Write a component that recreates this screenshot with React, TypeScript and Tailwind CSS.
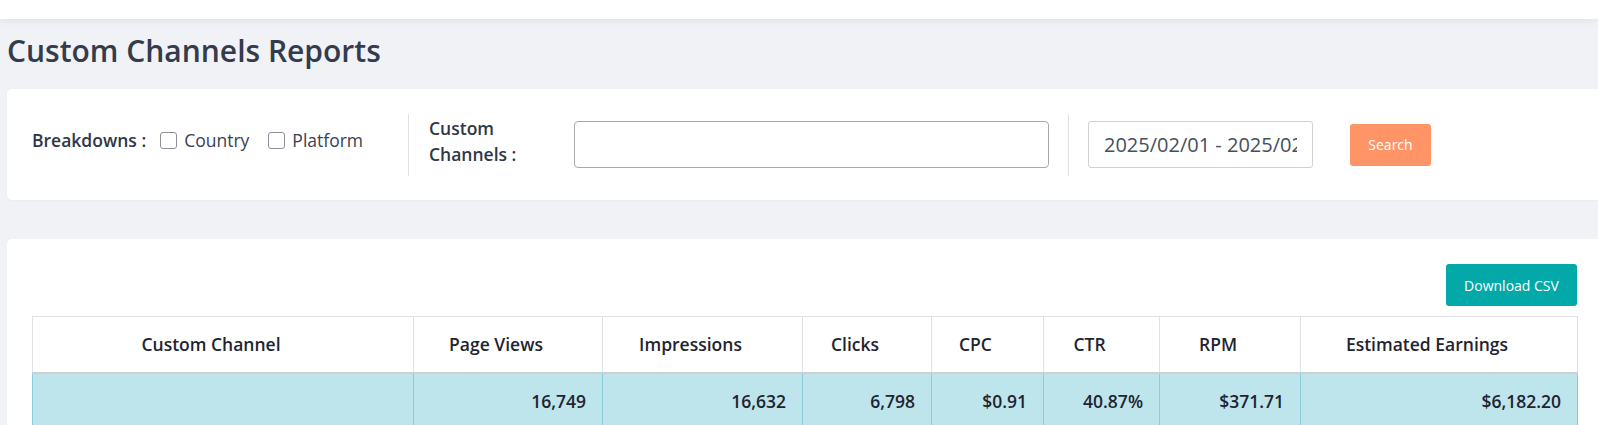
import React from 'react'

const columns = [
  { label: 'Custom Channel', width: 'w-[381px]' },
  { label: 'Page Views', width: 'w-[189px]' },
  { label: 'Impressions', width: 'w-[200px]' },
  { label: 'Clicks', width: 'w-[129px]' },
  { label: 'CPC', width: 'w-[112px]' },
  { label: 'CTR', width: 'w-[116px]' },
  { label: 'RPM', width: 'w-[141px]' },
  { label: 'Estimated Earnings', width: 'w-[277px]' },
]

const totals = ['', '16,749', '16,632', '6,798', '$0.91', '40.87%', '$371.71', '$6,182.20']

function Check({ label }: { label: string }) {
  return (
    <label className="flex items-center">
      <input
        type="checkbox"
        className="appearance-none w-[17px] h-[17px] rounded-[3px] border border-[#8f8f9b] bg-white"
      />
      <span className="ml-[7px] text-[17.5px] text-[#3a4151]">{label}</span>
    </label>
  )
}

export default function App() {
  return (
    <div className="w-full min-h-[425px] overflow-hidden bg-[#f1f2f6] font-['Open_Sans',sans-serif]">
      <div className="h-[19px] bg-white shadow-[0_2px_8px_rgba(0,0,0,0.07)]" />

      <h1 className="ml-[7px] mt-[14px] text-[30px] leading-[36px] font-semibold text-[#333b4d]">
        Custom Channels Reports
      </h1>

      <div className="ml-[7px] mt-[20px] w-[1595px] h-[111px] bg-white rounded-[5px] flex items-center pl-[25px] shadow-[0_1px_3px_rgba(0,0,0,0.03)]">
        <div className="w-[376px] flex items-center mb-2">
          <span className="text-[17.5px] font-semibold text-[#2f3646]">Breakdowns :</span>
          <div className="ml-[14px]">
            <Check label="Country" />
          </div>
          <div className="ml-[19px]">
            <Check label="Platform" />
          </div>
        </div>

        <div className="w-px h-[62px] bg-[#dee2e6]" />

        <div className="w-[165px] pl-[20px] mb-2">
          <div className="w-[110px] text-[17.5px] leading-[26px] font-semibold text-[#2f3646]">
            Custom Channels :
          </div>
        </div>

        <input
          type="text"
          className="w-[475px] h-[47px] rounded-[4px] border border-[#a8a8ad] bg-white px-3 text-[17px] outline-none"
        />

        <div className="ml-[19px] w-px h-[62px] bg-[#dee2e6]" />

        <input
          type="text"
          readOnly
          value="2025/02/01 - 2025/02/28"
          className="ml-[19px] w-[225px] h-[47px] rounded-[3px] border border-[#cfd2d6] bg-white pl-[15px] pr-[15px] text-[20px] text-[#464f5c] outline-none"
        />

        <button className="ml-[37px] w-[81px] h-[42px] rounded-[3px] bg-[#ff9566] text-[14px] text-white">
          Search
        </button>
      </div>

      <div className="ml-[7px] mt-[39px] w-[1595px] bg-white rounded-t-[5px] px-[25px] pt-[25px] pb-[20px]">
        <div className="flex justify-end w-[1545px]">
          <button className="w-[131px] h-[42px] rounded-[3px] bg-[#03a9a9] text-[14px] text-white">
            Download CSV
          </button>
        </div>

        <table className="mt-[10px] w-[1545px] table-fixed border-collapse border border-[#dee2e6]">
          <colgroup>
            {columns.map((c) => (
              <col key={c.label} className={c.width} />
            ))}
          </colgroup>
          <thead>
            <tr>
              {columns.map((c) => (
                <th
                  key={c.label}
                  className="h-[56px] border border-[#dee2e6] border-b-2 border-b-[#cfd0d2] pl-3 pr-9 text-center align-middle text-[17.5px] font-semibold text-[#1f2430]"
                >
                  {c.label}
                </th>
              ))}
            </tr>
          </thead>
          <tbody>
            <tr className="bg-[#bee5eb]">
              {totals.map((v, i) => (
                <td
                  key={i}
                  className="h-[56px] border border-[#86cfda] pr-4 text-right align-middle text-[17.5px] font-semibold text-[#1f2430]"
                >
                  {v}
                </td>
              ))}
            </tr>
          </tbody>
        </table>
      </div>
    </div>
  )
}
